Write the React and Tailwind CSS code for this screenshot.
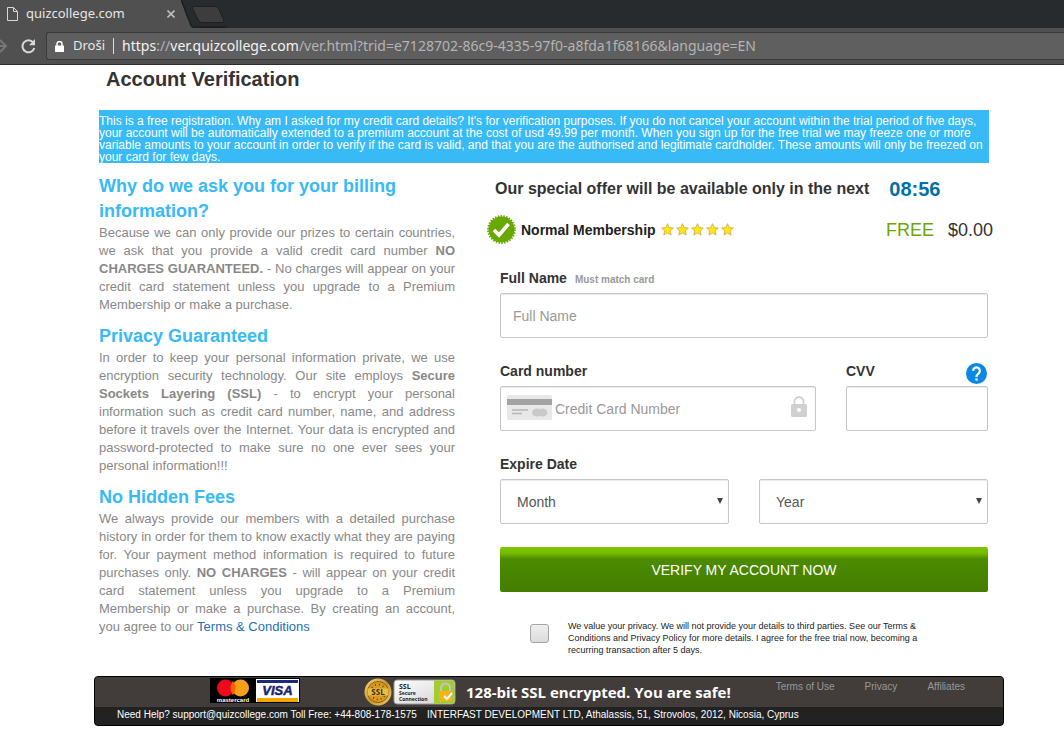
import React, { useState } from "react";

const REASONS = [
  {
    title: "Why do we ask you for your billing information?",
    body: (
      <>
        Because we can only provide our prizes to certain countries, we ask that you provide a valid
        credit card number <b>NO CHARGES GUARANTEED.</b> - No charges will appear on your credit card
        statement unless you upgrade to a Premium Membership or make a purchase.
      </>
    ),
  },
  {
    title: "Privacy Guaranteed",
    body: (
      <>
        In order to keep your personal information private, we use encryption security technology. Our
        site employs <b>Secure Sockets Layering (SSL)</b> - to encrypt your personal information such
        as credit card number, name, and address before it travels over the Internet. Your data is
        encrypted and password-protected to make sure no one ever sees your personal information!!!
      </>
    ),
  },
  {
    title: "No Hidden Fees",
    body: (
      <>
        We always provide our members with a detailed purchase history in order for them to know
        exactly what they are paying for. Your payment method information is required to future
        purchases only. <b>NO CHARGES</b> - will appear on your credit card statement unless you
        upgrade to a Premium Membership or make a purchase. By creating an account, you agree to our{" "}
        <a href="#terms" className="text-[#2370ad]">Terms &amp; Conditions</a>
      </>
    ),
  },
];

const FIELD =
  "block w-full h-[45px] rounded-[2px] border border-[#c6c6c6] bg-white text-sm text-[#555] placeholder:text-[#999] shadow-[inset_0_1px_1px_rgba(0,0,0,0.08)] outline-none";
const LABEL = "text-sm leading-5 font-bold text-[#333]";

/* ── Browser frame ─────────────────────────────────────────────── */

function BrowserBar() {
  return (
    <header className="h-[65px] bg-[#505050] border-b border-[#2c2c2c] font-['Noto_Sans','Open_Sans',sans-serif] text-[13px] overflow-hidden">
      <div className="h-7 bg-[#272b2d] flex">
        <div className="w-[181px] h-7 bg-[#505050] flex items-center pl-[7px] text-[#e6e6e6]">
          <svg width="11" height="14" viewBox="0 0 11 14" fill="none" stroke="#d8d8d8">
            <path d="M.5.5h6l4 4v9H.5zM6.5.5v4h4" />
          </svg>
          <span className="ml-2 flex-1">quizcollege.com</span>
          <button type="button" aria-label="Close tab" className="mr-[6px]">
            <svg width="8" height="8" viewBox="0 0 8 8" stroke="#bdbdbd" strokeWidth="1.6">
              <path d="M.5.5l7 7M7.5.5l-7 7" />
            </svg>
          </button>
        </div>
        <svg width="46" height="28" viewBox="0 0 46 28">
          <path d="M-1 0c3 5 6 16 9 22 1 4 2 6 5 6H-1z" fill="#505050" />
          <path d="M0 0c3 5 5 14 9 22 1 4 2 5 4 5h33" fill="none" stroke="#16191a" />
          <path d="M12.500 6.500h22q2 0 3 2l5 11q1 3-1 3h-20q-3 0-4-2l-6-12q-1-2 1-2z" fill="#3d3d3d" stroke="#1c1e1f" />
        </svg>
      </div>
      <div className="h-9 flex items-center">
        <svg width="8" height="14" viewBox="0 0 8 14" fill="none" stroke="#777" strokeWidth="2">
          <path d="M0 7h6M0 1l6 6-6 6" />
        </svg>
        <button type="button" aria-label="Reload" className="ml-[13px]">
          <svg width="15" height="15" viewBox="0 0 15 15" fill="none">
            <path d="M12.200 3.500A6 6 0 1 0 13.300 9" stroke="#d8d8d8" strokeWidth="2" />
            <path d="M14 0v6.200H8z" fill="#d8d8d8" />
          </svg>
        </button>
        <div className="ml-[10px] flex-1 h-7 rounded-l-[3px] border border-r-0 border-[#3a3a3a] bg-[#5f5f5f] flex items-center pl-2 text-[#e8e8e8]">
          <svg width="9" height="11" viewBox="0 0 9 11">
            <path d="M0 4.500h9V11H0z" fill="#fff" />
            <path d="M2 5V3a2.500 2.500 0 0 1 5 0v2" fill="none" stroke="#fff" strokeWidth="1.500" />
          </svg>
          <span className="ml-[9px]">Droši</span>
          <span className="mx-2 w-px h-4 bg-[#ddd]" />
          <span className="whitespace-nowrap text-sm text-[#b4b4b4]">
            <span className="text-[#f2f2f2]">https</span>://<span className="text-[#f2f2f2]">ver.quizcollege.com</span>
            /ver.html?trid=e7128702-86c9-4335-97f0-a8fda1f68166&amp;language=EN
          </span>
        </div>
      </div>
    </header>
  );
}

/* ── Icons ─────────────────────────────────────────────────────── */

function CheckBadge() {
  return (
    <svg width="29" height="29" viewBox="0 0 29 29">
      <circle cx="14.500" cy="14.500" r="13" fill="#68a800" />
      <circle cx="14.500" cy="14.500" r="13.400" fill="none" stroke="#68a800" strokeWidth="2" strokeDasharray="1.500 1.307" />
      <path d="M7 15l5 5L21.500 9" fill="none" stroke="#fff" strokeWidth="3.600" />
    </svg>
  );
}

function Stars() {
  return (
    <span className="flex gap-[2px]">
      {[1, 2, 3, 4, 5].map(n => (
        <svg key={n} width="13" height="13" viewBox="0 0 13 13">
          <path
            d="M6.500.7l1.700 3.900 4.200.4-3.200 2.800 1 4.300-3.700-2.300-3.700 2.300 1-4.300L.6 5l4.200-.4z"
            fill="#ffe80e" stroke="#cfa54c" strokeWidth=".8" strokeLinejoin="round"
          />
        </svg>
      ))}
    </span>
  );
}

function CardIcon() {
  return (
    <svg width="45" height="25" viewBox="0 0 45 25" className="absolute left-[7px] top-[9px] pointer-events-none">
      <rect width="45" height="25" rx="1.500" fill="#e8e8e8" />
      <path d="M0 4h45v6H0z" fill="#a3a3a3" />
      <path d="M5 15h16M5 18.500h10" stroke="#b5b5b5" strokeWidth="1.300" />
      <ellipse cx="30" cy="17.500" rx="5" ry="4" fill="#c9c9c9" />
      <ellipse cx="35.500" cy="17.500" rx="5" ry="4" fill="#c9c9c9" />
    </svg>
  );
}

function LockIcon() {
  return (
    <svg width="16" height="21" viewBox="0 0 16 21" className="absolute right-[9px] top-[10px] pointer-events-none">
      <rect y="8" width="16" height="13" rx="1.500" fill="#d0d0d0" />
      <path d="M3.500 9V5.500a4.500 4.500 0 0 1 9 0V9" fill="none" stroke="#d0d0d0" strokeWidth="1.800" />
      <circle cx="8" cy="14" r="2" fill="#fff" />
    </svg>
  );
}

function HelpIcon() {
  return (
    <svg width="21" height="21" viewBox="0 0 24 24">
      <circle cx="12" cy="12" r="12" fill="#0b87e4" />
      <path d="M8.200 9a3.800 3.800 0 1 1 6.300 2.800c-1.700 1.300-2.500 2-2.500 4.200" fill="none" stroke="#fff" strokeWidth="2.600" />
      <path d="M10.700 17.600h2.600v2.600h-2.600z" fill="#fff" />
    </svg>
  );
}

function CardLogos() {
  return (
    <svg width="90" height="25" viewBox="0 0 90 25" fontFamily="Liberation Sans, sans-serif">
      <path d="M0 0h90v25H0z" fill="#000" />
      <circle cx="15.500" cy="10" r="8.500" fill="#eb0a1e" />
      <circle cx="30.500" cy="10" r="8.500" fill="#f79e1b" />
      <path d="M23 6a8.500 8.500 0 0 1 0 8 8.500 8.500 0 0 1 0-8z" fill="#ff5f00" stroke="#ff5f00" strokeWidth="3" />
      <text x="23" y="23.500" fontSize="6" fontWeight="bold" fill="#fff" textAnchor="middle">mastercard</text>
      <path d="M46 1h43v23H46z" fill="#fff" />
      <path d="M47 2h41v3H47z" fill="#1a2a78" />
      <path d="M47 20h41v4H47z" fill="#f7a600" />
      <text x="67.500" y="17" fontSize="13" fontWeight="bold" fontStyle="italic" fill="#1b2470" stroke="#1b2470" strokeWidth=".5" textAnchor="middle">VISA</text>
    </svg>
  );
}

function SslSeals() {
  return (
    <svg width="92" height="28" viewBox="0 0 92 28" fontFamily="Open Sans, sans-serif" fontWeight="bold">
      <defs>
        <linearGradient id="gold" x1="0" y1="0" x2="1" y2="1">
          <stop offset="0" stopColor="#f6dd82" />
          <stop offset=".5" stopColor="#c8922a" />
          <stop offset="1" stopColor="#f0cf6a" />
        </linearGradient>
        <linearGradient id="silver" x1="0" y1="0" x2="1" y2="1">
          <stop offset="0" stopColor="#fff" />
          <stop offset="1" stopColor="#cfcfcf" />
        </linearGradient>
      </defs>
      <circle cx="14" cy="14" r="13.500" fill="url(#gold)" />
      <circle cx="14" cy="14" r="10.500" fill="#d99a1f" stroke="#8a5f10" />
      <circle cx="14" cy="14" r="7.500" fill="none" stroke="#4d3a10" strokeWidth="1.500" strokeDasharray="1 3" />
      <path d="M3.500 10.500h21v7h-21z" fill="#e9bd4a" />
      <text x="14" y="17" fontSize="8" fill="#3a2a08" textAnchor="middle">SSL</text>
      <rect x="30" y="2" width="61" height="24" rx="3" fill="url(#silver)" stroke="#9a9a9a" />
      <path d="M70 2.500h18q2.500 0 2.500 2.500v18q0 2.500-2.500 2.500H70z" fill="#a5cc2f" />
      <text x="35" y="11" fontSize="7" fill="#222">SSL</text>
      <text x="35" y="17" fontSize="5" fill="#222">Secure</text>
      <text x="35" y="23" fontSize="5" fill="#222">Connection</text>
      <path d="M77 14V10a4.500 4.500 0 0 1 9 0v4" fill="none" stroke="#c5c5c5" strokeWidth="2" />
      <rect x="75" y="13" width="13" height="10" rx="1" fill="#f2b418" />
      <path d="M80 18l3 3 5-6" fill="none" stroke="#fff" strokeWidth="2" />
    </svg>
  );
}

/* ── Page parts ────────────────────────────────────────────────── */

function Reasons() {
  return (
    <section className="space-y-[10px]">
      {REASONS.map(r => (
        <article key={r.title}>
          <h2 className="text-lg leading-[25px] font-bold text-[#37baf5]">{r.title}</h2>
          <p className="text-[13px] leading-[18px] text-justify text-[#888]">{r.body}</p>
        </article>
      ))}
    </section>
  );
}

function ExpireSelect({ id, label, options }) {
  return (
    <div className="relative flex-1">
      <select id={id} aria-label={label} className={`${FIELD} appearance-none pl-4`}>
        <option>{label}</option>
        {options.map(o => <option key={o}>{o}</option>)}
      </select>
      <svg width="6" height="6" viewBox="0 0 6 6" className="absolute right-[6px] top-[19px] pointer-events-none">
        <path d="M0 0h6L3 6z" fill="#444" />
      </svg>
    </div>
  );
}

function VerifyForm() {
  const [agree, setAgree] = useState(false);

  return (
    <form className="pl-[13px] pr-[5px] mt-6" onSubmit={e => e.preventDefault()}>
      <div className="flex items-baseline gap-2">
        <label htmlFor="name" className={LABEL}>Full Name</label>
        <span className="text-[10px] font-bold text-[#999]">Must match card</span>
      </div>
      <input id="name" placeholder="Full Name" className={`${FIELD} mt-[5px] pl-3`} />

      <div className="flex gap-[30px] mt-[23px]">
        <div className="flex-1">
          <label htmlFor="card" className={`${LABEL} block`}>Card number</label>
          <div className="relative mt-[5px]">
            <input id="card" placeholder="Credit Card Number" className={`${FIELD} pl-[54px]`} />
            <CardIcon />
            <LockIcon />
          </div>
        </div>
        <div className="w-[142px]">
          <div className="flex justify-between h-5">
            <label htmlFor="cvv" className={LABEL}>CVV</label>
            <button type="button" aria-label="What is CVV?" className="mt-[2px] mr-px h-[21px]"><HelpIcon /></button>
          </div>
          <input id="cvv" className={`${FIELD} mt-[5px] px-3`} />
        </div>
      </div>

      <label htmlFor="month" className={`${LABEL} block mt-[23px]`}>Expire Date</label>
      <div className="flex gap-[30px] mt-[5px]">
        <ExpireSelect id="month" label="Month" options={["01", "02", "03", "04", "05", "06", "07", "08", "09", "10", "11", "12"]} />
        <ExpireSelect id="year" label="Year" options={["2017", "2018", "2019", "2020", "2021", "2022"]} />
      </div>

      <button
        type="submit"
        className="block w-full h-[45px] mt-[23px] rounded-[2px] text-sm text-white bg-[linear-gradient(#80c600_0px,#76bc00_6px,#4c8b00_12px,#447d00_45px)]"
      >
        VERIFY MY ACCOUNT NOW
      </button>

      <div className="flex mt-7 pl-[30px]">
        <input
          id="agree"
          type="checkbox"
          checked={agree}
          onChange={e => setAgree(e.target.checked)}
          className="appearance-none shrink-0 w-[19px] h-[19px] mt-1 rounded-[3px] border border-[#a5a5a5] bg-linear-to-b from-[#eee] to-[#dcdcdc] checked:bg-[#888]"
        />
        <label htmlFor="agree" className="ml-[19px] max-w-[360px] text-[9px] leading-3 text-[#222]">
          We value your privacy. We will not provide your details to third parties. See our Terms &amp;
          Conditions and Privacy Policy for more details. I agree for the free trial now, becoming a
          recurring transaction after 5 days.
        </label>
      </div>
    </form>
  );
}

function Footer() {
  return (
    <footer className="mt-5 rounded-[4px] border border-black bg-[#222] text-[10px] overflow-hidden">
      <div className="flex h-[30px] bg-[#423d3b] pl-[115px] pr-[38px]">
        <span className="mt-px"><CardLogos /></span>
        <span className="ml-16 mt-px"><SslSeals /></span>
        <span className="ml-[10px] font-['Open_Sans',sans-serif] font-bold text-[15px] leading-[30px] text-white whitespace-nowrap">
          128-bit SSL encrypted. You are safe!
        </span>
        <nav className="ml-auto flex gap-[30px] leading-5 text-[#999] whitespace-nowrap">
          <a href="#terms">Terms of Use</a>
          <a href="#privacy">Privacy</a>
          <a href="#affiliates">Affiliates</a>
        </nav>
      </div>
      <p className="flex gap-[10px] pl-[22px] h-[18px] leading-4 text-white whitespace-nowrap">
        <span>Need Help? support@quizcollege.com Toll Free: +44-808-178-1575</span>
        <span>INTERFAST DEVELOPMENT LTD, Athalassis, 51, Strovolos, 2012, Nicosia, Cyprus</span>
      </p>
    </footer>
  );
}

export default function App() {
  return (
    <div className="min-h-screen bg-white font-['Liberation_Sans',Arial,sans-serif]">
      <BrowserBar />
      <main className="pl-[94px] pr-[60px]">
        <h1 className="pl-3 text-xl leading-7 font-bold text-[#333]">Account Verification</h1>
        <p className="mt-[17px] ml-[5px] mr-[15px] pt-[5px] text-xs leading-3 text-white bg-[#37baf5]">
          This is a free registration. Why am I asked for my credit card details? It's for verification
          purposes. If you do not cancel your account within the trial period of five days, your account
          will be automatically extended to a premium account at the cost of usd 49.99 per month. When
          you sign up for the free trial we may freeze one or more variable amounts to your account in
          order to verify if the card is valid, and that you are the authorised and legitimate
          cardholder. These amounts will only be freezed on your card for few days.
        </p>

        <div className="mt-[11px] pl-[5px] pr-[11px] grid grid-cols-[356fr_506fr] gap-8">
          <Reasons />
          <section>
            <div className="flex items-center h-[30px] pl-2 font-bold whitespace-nowrap">
              <span className="text-base text-[#333]">Our special offer will be available only in the next</span>
              <span className="ml-5 text-xl text-[#0071a8]">08:56</span>
            </div>
            <div className="flex items-center h-[29px] mt-[11px] whitespace-nowrap">
              <CheckBadge />
              <span className="ml-[5px] mr-[5px] text-sm font-bold text-[#222]">Normal Membership</span>
              <Stars />
              <span className="ml-auto text-lg text-[#68a800]">FREE</span>
              <span className="ml-[14px] text-lg text-[#333]">$0.00</span>
            </div>
            <VerifyForm />
          </section>
        </div>

        <Footer />
      </main>
    </div>
  );
}
